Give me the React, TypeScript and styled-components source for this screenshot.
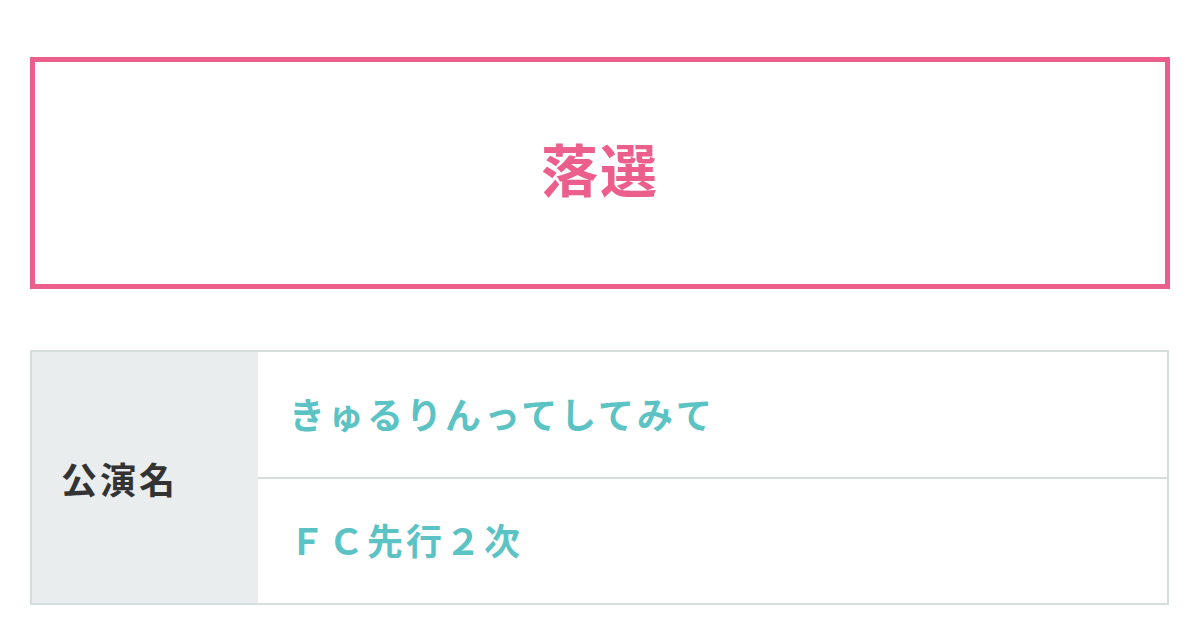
import React from 'react';
import styled, { createGlobalStyle } from 'styled-components';

const GlobalStyle = createGlobalStyle`
    html, body {
        margin: 0;
        padding: 0;
        background: #ffffff;
        font-family: "Noto Sans CJK JP", "Noto Sans", sans-serif;
    }
`;

const Page = styled.div`
    width: 1200px;
    height: 625px;
    box-sizing: border-box;
    padding: 57px 30px 0 30px;
    display: flex;
    flex-direction: column;
    gap: 61px;
`;

const ResultBox = styled.div`
    height: 232px;
    box-sizing: border-box;
    border: 5px solid #ec5f8c;
    display: flex;
    align-items: center;
    justify-content: center;
`;

const ResultText = styled.div`
    color: #ec5f8c;
    font-size: 57px;
    font-weight: 700;
    letter-spacing: 2px;
    padding-bottom: 12px;
`;

const InfoTable = styled.div`
    width: 1139px;
    height: 255px;
    box-sizing: border-box;
    border: 2px solid #d5dddd;
    display: grid;
    grid-template-columns: 226px 1fr;
`;

const HeadCell = styled.div`
    background: #e9edee;
    display: flex;
    align-items: center;
    padding-left: 29px;
    color: #333333;
    font-size: 36px;
    font-weight: 700;
    letter-spacing: 3px;
`;

const Values = styled.div`
    display: flex;
    flex-direction: column;
`;

const ValueRow = styled.div<{ $last?: boolean }>`
    flex: 1;
    display: flex;
    align-items: center;
    padding-left: 31px;
    padding-bottom: 3px;
    border-bottom: ${({ $last }) => ($last ? 'none' : '2px solid #d5dddd')};
    color: #5cc3c4;
    font-size: 36px;
    font-weight: 700;
    letter-spacing: 3px;
`;

export default function App() {
    return (
        <>
            <GlobalStyle />
            <Page>
                <ResultBox>
                    <ResultText>落選</ResultText>
                </ResultBox>
                <InfoTable>
                    <HeadCell>公演名</HeadCell>
                    <Values>
                        <ValueRow>きゅるりんってしてみて</ValueRow>
                        <ValueRow $last>ＦＣ先行２次</ValueRow>
                    </Values>
                </InfoTable>
            </Page>
        </>
    );
}
